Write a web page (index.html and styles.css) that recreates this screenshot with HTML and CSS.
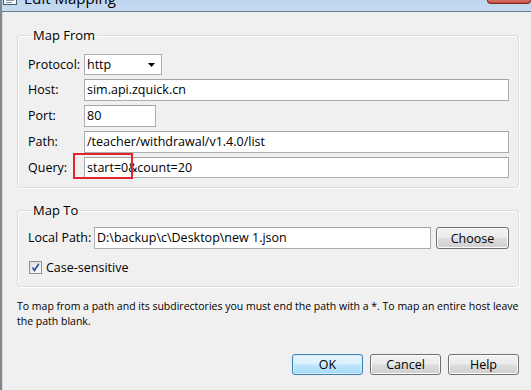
FILE: index.html
```html
<!DOCTYPE html>
<html>
<head>
<meta charset="utf-8">
<title>Edit Mapping</title>
<link rel="stylesheet" href="styles.css">
</head>
<body>
<div class="window">
  <div class="titlebar">
    <svg class="app-icon" width="14" height="10" viewBox="0 0 14 10">
      <rect x="0.5" y="-4.5" width="13" height="9" fill="#eef3f8" stroke="#4e5c6a"/>
      <rect x="2" y="-2" width="10" height="5" fill="#fff"/>
      <line x1="3" y1="0.5" x2="11" y2="0.5" stroke="#8a99aa"/>
      <line x1="3" y1="2.5" x2="9" y2="2.5" stroke="#8a99aa"/>
    </svg>
    <span class="title">Edit Mapping</span>
    <span class="close-btn"></span>
  </div>
  <div class="client">
    <fieldset class="group group-from">
      <legend>Map From</legend>
      <div class="form-grid">
        <span class="label">Protocol:</span>
        <div class="select">
          <span>http</span>
          <svg class="arrow" width="7" height="4" viewBox="0 0 7 4"><path d="M0 0H7L3.5 4Z" fill="#000"/></svg>
        </div>
        <span class="label">Host:</span>
        <div class="field">sim.api.zquick.cn</div>
        <span class="label">Port:</span>
        <div class="field field-port">80</div>
        <span class="label">Path:</span>
        <div class="field">/teacher/withdrawal/v1.4.0/list</div>
        <span class="label">Query:</span>
        <div class="field field-query">start=0&amp;count=20<span class="highlight"></span></div>
      </div>
    </fieldset>
    <fieldset class="group group-to">
      <legend>Map To</legend>
      <div class="path-row">
        <span class="label label-path">Local Path:</span>
        <div class="field field-grow">D:\backup\c\Desktop\new 1.json</div>
        <button class="btn btn-choose">Choose</button>
      </div>
      <div class="check-row">
        <span class="checkbox">
          <svg width="9" height="9" viewBox="0 0 9 9"><path d="M1.5 4.5L3.5 7.5L7.8 0.8" fill="none" stroke="#2a4f9e" stroke-width="1.6"/></svg>
        </span>
        <span>Case-sensitive</span>
      </div>
    </fieldset>
    <p class="help">To map from a path and its subdirectories you must end the path with a *. To map an entire host leave the path blank.</p>
    <div class="buttons">
      <button class="btn btn-default">OK</button>
      <button class="btn">Cancel</button>
      <button class="btn">Help</button>
    </div>
  </div>
</div>
</body>
</html>
```

FILE: styles.css
```css
html, body {
  margin: 0;
  padding: 0;
}
body {
  width: 531px;
  height: 390px;
  overflow: hidden;
  background: #f0f0f0;
  font-family: "Open Sans", "Noto Sans", sans-serif;
  font-size: 12.5px;
  color: #000;
}
.window {
  height: 390px;
  display: flex;
  flex-direction: column;
  border-left: 2px solid #7f8890;
  box-sizing: border-box;
}
.titlebar {
  height: 11px;
  flex: none;
  display: flex;
  align-items: flex-start;
  background: linear-gradient(#bcd4ee, #c7dcf2);
  border-bottom: 1px solid #6b7c8e;
  overflow: hidden;
}
.app-icon {
  margin-left: 1px;
  flex: none;
}
.title {
  font-family: "Open Sans", sans-serif;
  font-size: 15px;
  line-height: 15px;
  margin-top: -9px;
  margin-left: 7px;
}
.close-btn {
  margin-left: auto;
  width: 42px;
  height: 3px;
  background: linear-gradient(#d8766a, #c24a3d);
  border: 1px solid #7a2a22;
  border-top: 0;
  border-radius: 0 0 4px 4px;
}
.client {
  flex: 1;
  display: flex;
  flex-direction: column;
  padding: 0 12px 0 14px;
  border-left: 1px solid #d9d9d9;
}
.group {
  margin: 0;
  border: 1px solid #d5dfe5;
  border-radius: 3px;
  box-shadow: inset 1px 1px 0 #fff, 1px 1px 0 #fff;
  padding: 0 9px 0 10px;
}
.group legend {
  font-size: 13px;
  padding: 0 2px;
  margin-left: 3px;
  line-height: 16px;
}
.group-from {
  margin-top: 15px;
  padding-top: 11px;
  padding-bottom: 9px;
}
.form-grid {
  display: grid;
  grid-template-columns: 56px 1fr;
  row-gap: 4px;
  align-items: center;
}
.label {
  line-height: 16px;
  white-space: nowrap;
}
.field {
  height: 22px;
  box-sizing: border-box;
  background: #fff;
  border: 1px solid #abadb3;
  border-top-color: #a3a3a3;
  padding: 0 2px;
  line-height: 20px;
  white-space: nowrap;
  overflow: hidden;
}
.field-port {
  width: 72px;
}
.field-query {
  position: relative;
  height: 21px;
  line-height: 19px;
  overflow: visible;
}
.highlight {
  position: absolute;
  left: -12px;
  top: -5px;
  width: 60px;
  height: 26px;
  box-sizing: border-box;
  border: 2px solid #e0262a;
}
.select {
  width: 78px;
  height: 21px;
  box-sizing: border-box;
  background: #fff;
  border: 1px solid #abadb3;
  display: flex;
  align-items: center;
  justify-content: space-between;
  padding: 0 6px 0 2px;
}
.group-to {
  margin-top: 14px;
  padding-top: 9px;
  padding-bottom: 10px;
}
.path-row {
  display: flex;
  align-items: center;
  gap: 5px;
}
.label-path {
  flex: none;
  width: 61px;
}
.field-grow {
  flex: 1;
  min-width: 0;
}
.btn {
  font-family: "Open Sans", "Noto Sans", sans-serif;
  font-size: 12.5px;
  color: #000;
  height: 21px;
  width: 71px;
  padding: 0;
  border: 1px solid #707070;
  border-radius: 3px;
  background: linear-gradient(#f2f2f2 0%, #ebebeb 48%, #dddddd 52%, #cfcfcf 100%);
  box-shadow: inset 0 0 0 1px #fcfcfc;
}
.btn-choose {
  width: 73px;
  height: 22px;
  flex: none;
}
.btn-default {
  border-color: #3c7fb1;
  background: linear-gradient(#eaf6fd 0%, #d9f0fc 48%, #bee6fd 52%, #a7d9f5 100%);
  box-shadow: inset 0 0 0 1px #d8ecf9;
}
.check-row {
  display: flex;
  align-items: center;
  gap: 4px;
  margin-top: 10px;
  padding-left: 1px;
}
.checkbox {
  width: 13px;
  height: 13px;
  box-sizing: border-box;
  border: 1px solid #8f8f8f;
  background: linear-gradient(135deg, #dedede, #fbfbfb);
  display: flex;
  align-items: center;
  justify-content: center;
}
.help {
  margin: 12px 0 0 0;
  font-size: 10.5px;
  line-height: 15px;
  padding-right: 0;
}
.buttons {
  display: flex;
  justify-content: flex-end;
  gap: 7px;
  margin-top: 25px;
}
```
